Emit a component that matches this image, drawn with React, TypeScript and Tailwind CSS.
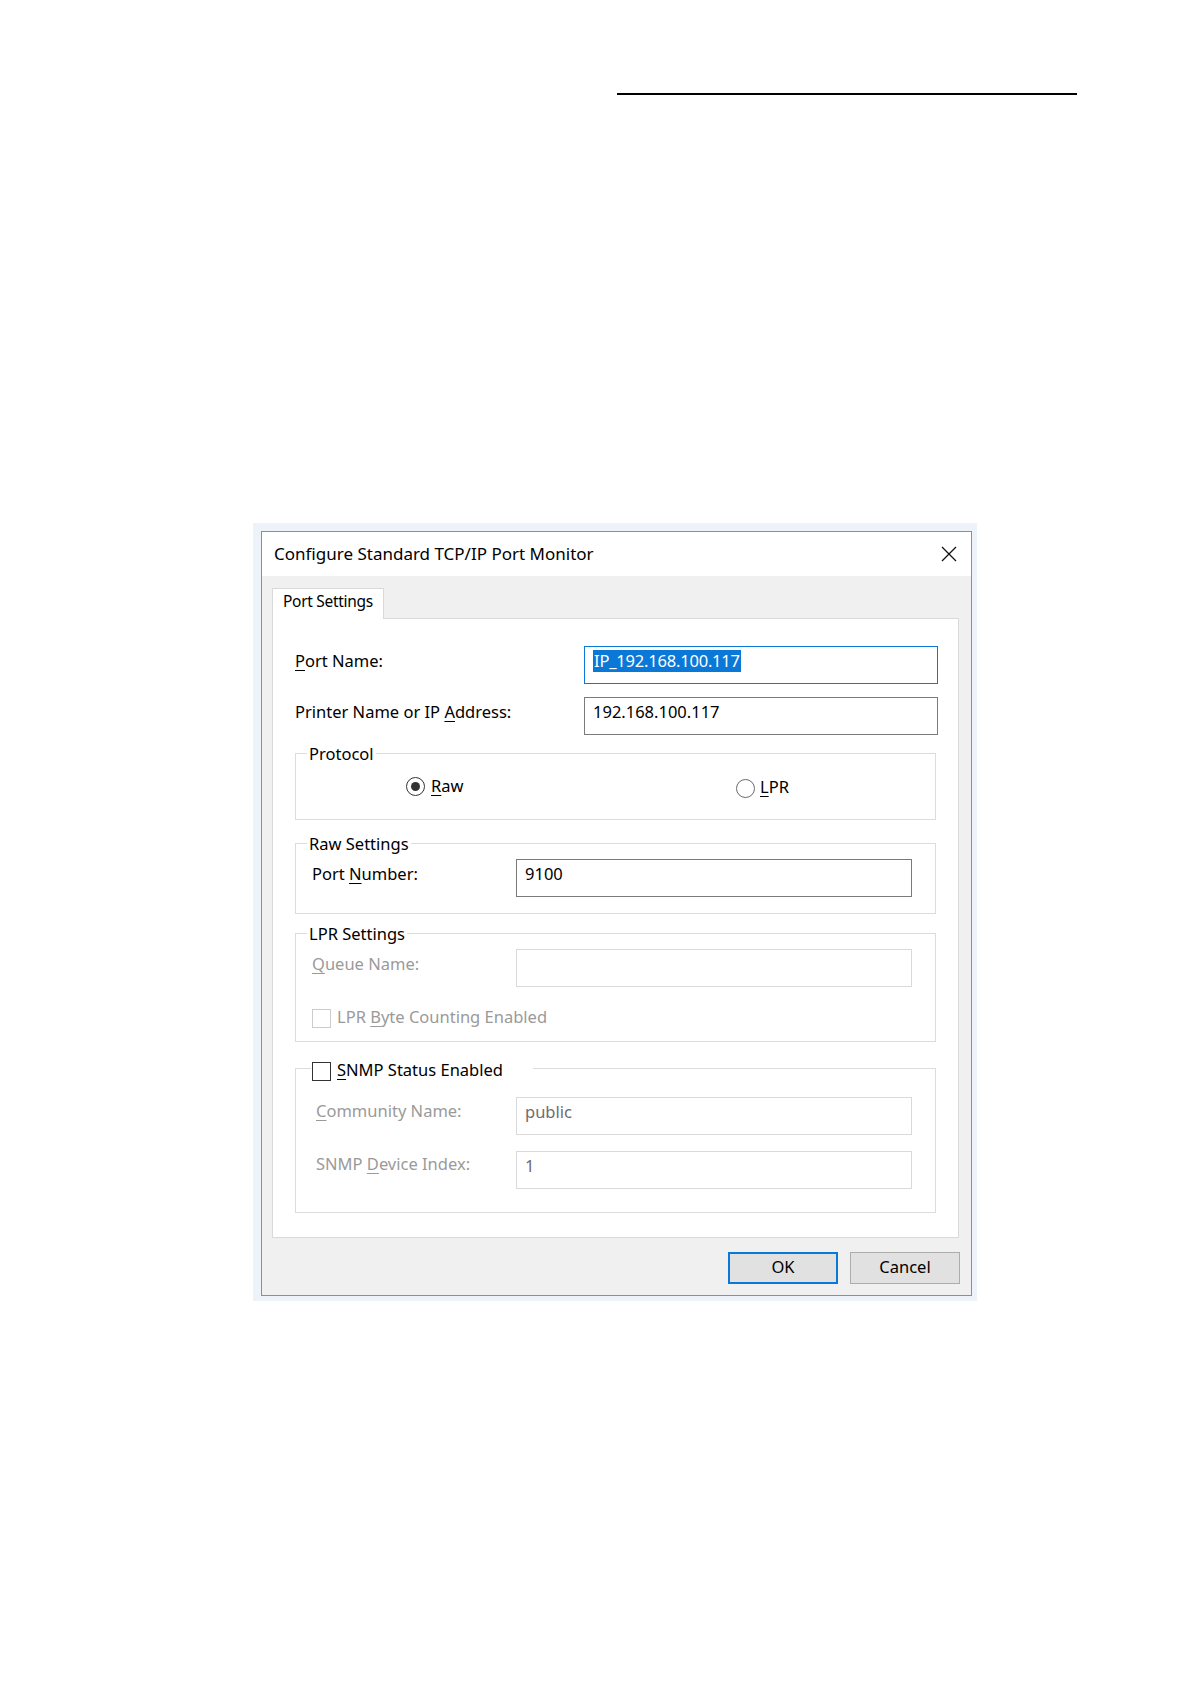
import React from "react";

const FONT = "font-['Noto_Sans','Open_Sans',sans-serif]";

function Edit({
  w,
  value,
  state = "normal",
}: {
  w: string;
  value?: React.ReactNode;
  state?: "normal" | "focus" | "disabled";
}) {
  const border =
    state === "focus"
      ? "border-[#0a78d7]"
      : state === "disabled"
      ? "border-[#d9d9d9]"
      : "border-[#7a7a7a]";
  const color = state === "disabled" ? "text-[#6d6d6d]" : "text-black";
  return (
    <div
      className={`${w} h-[38px] border ${border} bg-white flex items-center pl-[8px] pb-[8px] text-[16.5px] leading-[22px] ${color}`}
    >
      {value}
    </div>
  );
}

function GroupBox({
  title,
  h,
  children,
  className = "",
}: {
  title: React.ReactNode;
  h: string;
  children?: React.ReactNode;
  className?: string;
}) {
  return (
    <div className={`relative w-[641px] ${h} border border-[#dcdcdc] ${className}`}>
      <div className="absolute left-[11px] top-0 -translate-y-1/2 bg-white px-[2px] text-[16.5px] leading-[22px] text-black">
        {title}
      </div>
      {children}
    </div>
  );
}

function Radio({ checked }: { checked?: boolean }) {
  return (
    <div
      className={`w-[19px] h-[19px] rounded-full border-[1.5px] ${
        checked ? "border-[#333333]" : "border-[#6a6a6a]"
      } flex items-center justify-center bg-white`}
    >
      {checked && <div className="w-[9px] h-[9px] rounded-full bg-[#333333]" />}
    </div>
  );
}

function CheckBox({ disabled }: { disabled?: boolean }) {
  return (
    <div
      className={`w-[19px] h-[19px] border ${
        disabled ? "border-[#cccccc]" : "border-[#333333]"
      } bg-white`}
    />
  );
}

export default function App() {
  return (
    <div className={`w-[1191px] min-h-[1684px] bg-white pt-[93px] ${FONT}`}>
      <div className="ml-[617px] w-[460px] h-[2px] bg-black" />

      <div className="ml-[253px] mt-[428px] w-[724px] bg-[#eef3f9] pt-[8px] pl-[8px] pr-[5px] pb-[5px]">
        <div className="w-[711px] h-[765px] border border-[#5b9bd5] bg-[#f0f0f0] flex flex-col">
          {/* Title bar */}
          <div className="h-[44px] bg-white flex items-center justify-between pl-[12px] pr-[14px]">
            <span className="text-[17px] text-black">Configure Standard TCP/IP Port Monitor</span>
            <svg width="16" height="16" viewBox="0 0 16 16">
              <path d="M1 1 L15 15 M15 1 L1 15" stroke="#111" strokeWidth="1.3" />
            </svg>
          </div>

          {/* Body */}
          <div className="flex-1 pl-[10px] pt-[12px]">
            {/* Tab */}
            <div className="relative z-10 -mb-px w-[112px] h-[31px] border border-b-0 border-[#d9d9d9] bg-white flex items-center pl-[10px] pb-[5px] text-[15.5px] tracking-[-0.3px] text-black">
              Port Settings
            </div>

            {/* Panel */}
            <div className="w-[687px] h-[620px] border border-[#d9d9d9] bg-white pl-[22px] pt-[27px]">
              {/* Port name */}
              <div className="flex items-center">
                <div className="w-[289px] pb-[8px] text-[16.5px] text-black">
                  <u className="underline-offset-[3px]">P</u>ort Name:
                </div>
                <Edit
                  w="w-[354px]"
                  state="focus"
                  value={
                    <span className="bg-[#0a78d7] text-white leading-[22px] px-[1px] tracking-[-0.2px]">
                      IP_192.168.100.117
                    </span>
                  }
                />
              </div>

              {/* Printer name */}
              <div className="flex items-center mt-[13px]">
                <div className="w-[289px] pb-[8px] text-[16.5px] text-black">
                  Printer Name or IP <u className="underline-offset-[3px]">A</u>ddress:
                </div>
                <Edit w="w-[354px]" value="192.168.100.117" />
              </div>

              {/* Protocol */}
              <GroupBox title="Protocol" h="h-[67px]" className="mt-[18px]">
                <div className="flex items-center pl-[110px] pt-[17px]">
                  <div className="w-[330px] flex items-center gap-[6px] text-[16.5px] leading-[25px] text-black">
                    <Radio checked />
                    <span className="pb-[3px]">
                      <u className="underline-offset-[3px]">R</u>aw
                    </span>
                  </div>
                  <div className="flex items-center gap-[5px] text-[16.5px] leading-[25px] text-black mt-[3px]">
                    <Radio />
                    <span className="pb-[3px]">
                      <u className="underline-offset-[3px]">L</u>PR
                    </span>
                  </div>
                </div>
              </GroupBox>

              {/* Raw settings */}
              <GroupBox title="Raw Settings" h="h-[71px]" className="mt-[23px]">
                <div className="flex items-center pl-[16px] pt-[15px]">
                  <div className="w-[204px] pb-[8px] text-[16.5px] text-black">
                    Port <u className="underline-offset-[3px]">N</u>umber:
                  </div>
                  <Edit w="w-[396px]" value="9100" />
                </div>
              </GroupBox>

              {/* LPR settings */}
              <GroupBox title="LPR Settings" h="h-[109px]" className="mt-[19px]">
                <div className="flex items-center pl-[16px] pt-[15px]">
                  <div className="w-[204px] pb-[8px] text-[16.5px] text-[#9a9a9a]">
                    <u className="underline-offset-[3px]">Q</u>ueue Name:
                  </div>
                  <Edit w="w-[396px]" state="disabled" />
                </div>
                <div className="flex items-center gap-[6px] pl-[16px] mt-[18px] text-[16.5px] leading-[24px] text-[#9a9a9a]">
                  <CheckBox disabled />
                  <span className="pb-[2px]">
                    LPR <u className="underline-offset-[3px]">B</u>yte Counting Enabled
                  </span>
                </div>
              </GroupBox>

              {/* SNMP */}
              <div className="relative w-[641px] h-[145px] border border-[#dcdcdc] mt-[26px]">
                <div className="absolute left-[15px] top-[2px] -translate-y-1/2 bg-white pl-[1px] pr-[30px] flex items-center gap-[6px] text-[16.5px] leading-[24px] text-black">
                  <CheckBox />
                  <span className="pb-[2px]">
                    <u className="underline-offset-[3px]">S</u>NMP Status Enabled
                  </span>
                </div>
                <div className="flex items-center pl-[20px] pt-[28px]">
                  <div className="w-[200px] pb-[9px] text-[16.5px] text-[#9a9a9a]">
                    <u className="underline-offset-[3px]">C</u>ommunity Name:
                  </div>
                  <Edit w="w-[396px]" state="disabled" value="public" />
                </div>
                <div className="flex items-center pl-[20px] mt-[16px]">
                  <div className="w-[200px] pb-[11px] text-[16.5px] text-[#9a9a9a]">
                    SNMP <u className="underline-offset-[3px]">D</u>evice Index:
                  </div>
                  <Edit w="w-[396px]" state="disabled" value="1" />
                </div>
              </div>
            </div>

            {/* Buttons */}
            <div className="flex justify-end gap-[12px] mt-[14px] pr-[11px]">
              <button className="w-[110px] h-[32px] border-2 border-[#0a78d7] bg-[#e1e1e1] text-[16.5px] text-black pb-[2px]">
                OK
              </button>
              <button className="w-[110px] h-[32px] border border-[#adadad] bg-[#e1e1e1] text-[16.5px] text-black pb-[2px]">
                Cancel
              </button>
            </div>
          </div>
        </div>
      </div>
    </div>
  );
}
